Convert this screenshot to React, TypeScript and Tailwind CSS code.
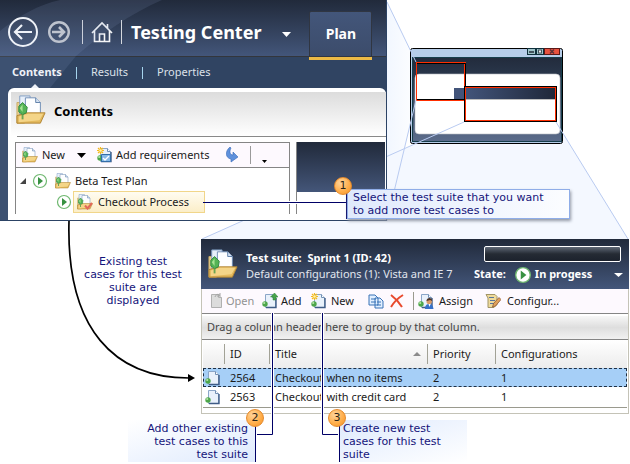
import React, { useState } from 'react';

type IconProps = { className?: string };

const FolderIcon: React.FC<IconProps & { check?: boolean }> = ({ className, check }) => (
  <svg viewBox="0 0 32 32" className={className} aria-hidden="true">
    <path d="M1 8h8v22H1z" fill="#e9cf8d" stroke="#c9ab68" />
    <path d="M4 1h11v20H4z" fill="#e8f0fa" stroke="#7f9cc2" />
    <path d="M10 3h11l5 5v20H10z" fill="#fdfeff" stroke="#6d8bb3" />
    <path d="M21 3v5h5" fill="#d4e1f1" stroke="#5b7da8" />
    <path d="M1 22l11-3h19l-5 11H1z" fill="#e3b95c" stroke="#b08433" />
    <path d="M3 23l10-3h16l-4 7-22 2z" fill="#f4d588" />
    <path d="M3 12l4-4 5 5-1 6-4 2-4-3z" fill="#54b355" stroke="#2f8840" />
    <path d="M4 14l3-4v8z" fill="#a6e394" />
    <path d="M7 21v5" stroke="#6ba552" strokeWidth="2" />
    {check && <path d="M16 23l5 6 9-11" fill="none" stroke="#e2685a" strokeWidth="4" />}
  </svg>
);

type DocKind = 'plain' | 'open' | 'add' | 'new' | 'assign' | 'edit' | 'req';

const DocIcon: React.FC<IconProps & { kind?: DocKind }> = ({ className, kind = 'plain' }) => {
  const gray = kind === 'open';
  return (
    <svg viewBox="0 0 16 16" className={className} aria-hidden="true">
      {kind !== 'edit' && (
        <>
          <path
            d="M3.5 1.5h7l3 3v10h-10z"
            fill={gray ? '#dcdcdc' : '#e9f1fb'}
            stroke={gray ? '#b0b0b0' : '#8ba6c8'}
          />
          <path d="M10.5 1.5v3h3" fill={gray ? '#eee' : '#fff'} stroke={gray ? '#b0b0b0' : '#7390b4'} />
        </>
      )}
      {!gray && kind !== 'edit' && (
        <>
          <path d="M4 14.500h10V5" fill="none" stroke="#3f5c86" strokeWidth="1.400" />
          <circle cx="3" cy="11" r="2.700" fill="#4da64a" />
          <circle cx="2.200" cy="10" r="1.100" fill="#b5e5a7" />
        </>
      )}
      {gray && <path d="M7 4c1-3 3-3 5-2M12 0v3h-3" fill="none" stroke="#a4a4a4" />}
      {kind === 'add' && <path d="M8.500 4L12.500 0 16 4h-2v3h-3V4z" fill="#47a34b" stroke="#2a7d35" strokeWidth=".5" />}
      {(kind === 'new' || kind === 'req') && (
        <>
          <path d="M3.500 0v7M0 3.500h7M1 1l5 5M6 1L1 6" stroke="#f4b91f" strokeWidth="1.200" />
          <circle cx="3.500" cy="3.500" r="1.300" fill="#fff3a6" />
        </>
      )}
      {kind === 'req' && (
        <>
          <path d="M4.500 7.500h9v7h-9z" fill="#86b8e7" stroke="#326da8" />
          <path d="M6 11l2 2 4-4" fill="none" stroke="#fff" strokeWidth="1.300" />
        </>
      )}
      {kind === 'assign' && (
        <>
          <path d="M7 16c0-4 2-5 4-5s4 1 4.500 5z" fill="#3771c8" />
          <circle cx="11.200" cy="8.500" r="2.700" fill="#d99a67" />
          <path d="M8.500 8c0-4 6-4 5.600 0l-2-1z" fill="#493226" />
          <path d="M10.500 11l1 3 1-3z" fill="#fff" />
        </>
      )}
      {kind === 'edit' && (
        <>
          <path d="M1 1.500h9l2 2v8l-3 3H3V5z" fill="#efda9b" stroke="#a19467" />
          <path d="M4 4.500h5M5 7.500h5M5 10.500h4" stroke="#58759c" />
          <path d="M7.500 14l1-3.500L14 4.500 16 6.500 10.500 13z" fill="#e0a15b" stroke="#814c2a" strokeWidth=".7" />
        </>
      )}
    </svg>
  );
};

const PlayIcon: React.FC<IconProps> = ({ className }) => (
  <svg viewBox="0 0 16 16" className={className} aria-hidden="true">
    <circle cx="8" cy="8" r="6.500" fill="#fff" stroke="#6fb870" strokeWidth="1.200" />
    <path d="M6 4l5 4-5 4z" fill="#379141" />
  </svg>
);

const Caret: React.FC<IconProps> = ({ className }) => (
  <svg viewBox="0 0 10 5" preserveAspectRatio="none" className={className} aria-hidden="true">
    <path d="M0 0h10L5 5z" fill="currentColor" />
  </svg>
);

const Badge: React.FC<{ n: number; className: string }> = ({ n, className }) => (
  <span
    className={`absolute z-30 flex size-[18px] items-center justify-center rounded-full border border-[#e58a2c] bg-[radial-gradient(circle_at_35%_30%,#ffd49a,#ffac47_60%,#f29227)] font-['DejaVu_Sans',sans-serif] text-[11px] text-[#2b2418] ${className}`}
  >
    {n}
  </span>
);

/* Small overview of the whole application window */
const OverviewWindow: React.FC = () => (
  <svg viewBox="0 0 154 98" className="h-[98px] w-[154px]" role="img" aria-label="Application window">
    <defs>
      <linearGradient id="frame" x1="0" y1="0" x2="0" y2="1">
        <stop offset="0" stopColor="#222b3c" />
        <stop offset=".2" stopColor="#29364a" />
        <stop offset="1" stopColor="#5b6c8b" />
      </linearGradient>
      <linearGradient id="strip">
        <stop offset="0" stopColor="#42547a" />
        <stop offset="1" stopColor="#1f2739" />
      </linearGradient>
    </defs>
    <rect x=".5" y="1.500" width="152" height="95" rx="2" fill="#b6cde9" stroke="#000" />
    <rect x="2.500" y="10.500" width="149" height="84" fill="url(#frame)" stroke="#173e4c" />
    <rect x="5" y="27" width="145" height="60" rx="4" fill="#fff" stroke="#b8bcc3" strokeWidth=".6" />
    <rect x="117.500" y="1.500" width="8" height="6" fill="#9fc4ca" stroke="#0f303c" />
    <path d="M119 5h5" stroke="#43545e" strokeWidth="2" />
    <rect x="126.500" y="1.500" width="7" height="6" fill="#9fc4ca" stroke="#0f303c" />
    <rect x="128.500" y="3" width="3" height="3" fill="#eee" stroke="#43545e" />
    <rect x="134.500" y="1.500" width="15" height="6" fill="#e8523f" stroke="#5b1817" />
    <path d="M140 2.500l4 4M144 2.500l-4 4" stroke="#59333a" strokeWidth="1.500" />
    <rect x="44" y="41" width="11" height="11" fill="#42547a" />
    <path d="M6.500 15v38M54.500 16v24" stroke="#ff2e00" />
    <path d="M6 15.500h50" stroke="#ff2e00" />
    <path d="M7 16.500h48.500V40M7 52.500h48" fill="none" stroke="#000" />
    <path d="M6 53.500h49" stroke="#ff2e00" />
    <rect x="54.500" y="39.500" width="92" height="35" fill="#fff" stroke="#000" />
    <rect x="55.500" y="40.500" width="90" height="33" fill="#fff" stroke="#ff2e00" />
    <rect x="56" y="41" width="89" height="11" fill="url(#strip)" />
    <path d="M56 52.500h89" stroke="#bdbdbd" />
  </svg>
);

const ContentsPanel: React.FC = () => {
  const tabs = ['Contents', 'Results', 'Properties'];
  const [tab, setTab] = useState('Contents');
  return (
    <section className="relative z-10 h-[221px] min-w-0 flex-[387] overflow-hidden border-r border-b border-[#2c4365] bg-[#304462] text-white">
      <svg viewBox="0 0 180 221" className="pointer-events-none absolute top-0 left-0 z-10 h-[221px] w-[180px]" aria-hidden="true">
        <path d="M0 31C20 15 38 5 60 0h102C130 14 100 35 76 56L50 88H12q-4 0-4 4v129H0z" fill="#8ea5ca" opacity=".14" />
      </svg>
      <header className="flex h-[57px] items-center border-b border-[#33363c] bg-linear-to-b from-[#212a3b] to-[#43567a] pl-2">
        <button aria-label="Back" className="mt-2 shrink-0">
          <svg viewBox="0 0 30 30" className="size-[30px]" fill="none" stroke="#fff">
            <circle cx="15" cy="15" r="14" strokeWidth="2" />
            <path d="M24 15H8M14 8l-7 7 7 7" strokeWidth="2.200" />
          </svg>
        </button>
        <button aria-label="Forward" className="mt-2 ml-[10px] shrink-0">
          <svg viewBox="0 0 22 22" className="size-[22px]" fill="none" stroke="#c6c9cf">
            <circle cx="11" cy="11" r="9.800" strokeWidth="2.400" />
            <path d="M4 11h12M11 6l5 5-5 5" strokeWidth="2.600" />
          </svg>
        </button>
        <span className="mt-2 ml-3 h-6 w-px shrink-0 bg-[#d5d8de]" />
        <button aria-label="Home" className="mt-2 ml-2 shrink-0">
          <svg viewBox="0 0 22 22" className="size-[22px]" fill="none" stroke="#f4f5f7" strokeWidth="1.600">
            <path d="M1 12L11 2l10 10M3.500 10v10.500h15V10M8.500 20v-7h5v7M16.500 7V3" />
          </svg>
        </button>
        <span className="mt-2 ml-2 h-6 w-px shrink-0 bg-[#d5d8de]" />
        <h1 className="mt-2 ml-[9px] shrink-0 text-lg leading-6 font-bold whitespace-nowrap">Testing Center</h1>
        <button aria-label="Choose center" className="mt-3 mr-[18px] ml-auto shrink-0">
          <Caret className="h-[5px] w-[9px]" />
        </button>
        <button className="relative mt-[11px] mr-[14px] h-[46px] w-[63px] shrink-0 rounded-t-xs border border-[#303642] bg-linear-to-b from-[#43567a] to-[#3c4c6b] text-sm font-bold">
          Plan
          <span className="absolute -right-px -bottom-1 -left-px h-[3px] bg-[#edba45]" />
        </button>
      </header>
      <nav className="flex h-[31px] items-center pl-3 text-[11px]">
        {tabs.map((t, i) => (
          <React.Fragment key={t}>
            {i > 0 && <span className="mx-[14px] h-3 w-px bg-[#a6d5ee]" />}
            <button onClick={() => setTab(t)} className={`relative ${t === tab ? 'font-bold' : 'text-[#dce1e9]'}`}>
              {t}
              {t === tab && (
                <svg viewBox="0 0 10 5" className="absolute -bottom-2 left-[18px] h-[5px] w-[10px]" aria-hidden="true">
                  <path d="M0 5l5-5 5 5z" fill="#fff" />
                </svg>
              )}
            </button>
          </React.Fragment>
        ))}
      </nav>
      <div className="ml-2 h-[132px] rounded-t-md bg-white pt-1 pl-[3px] text-[#1b1b1b]">
        <div className="flex h-11 items-center gap-2 bg-linear-to-b from-[#dcdcdc] to-white pl-[5px]">
          <FolderIcon className="-mt-2 size-[30px]" />
          <h2 className="-mt-1 text-[13px] font-bold text-black">Contents</h2>
        </div>
        <hr className="ml-[6px] border-[#898989]" />
        <div className="mt-[5px] ml-1 flex h-[72px] gap-[6px] text-[11px]">
          <div className="min-w-0 flex-1 border border-b-0 border-[#858585]">
            <div className="flex h-[25px] items-center border-b border-[#858585] bg-[#fdf9fe] pl-[6px] whitespace-nowrap">
              <button className="flex items-center gap-1">
                <FolderIcon className="size-4" />
                New
              </button>
              <button aria-label="New options" className="ml-3 text-black">
                <Caret className="h-[5px] w-[9px]" />
              </button>
              <button className="ml-[11px] flex items-center gap-[3px]">
                <DocIcon kind="req" className="size-4" />
                Add requirements
              </button>
              <button aria-label="Refresh" className="ml-[17px]">
                <svg viewBox="0 0 12 16" className="h-4 w-3">
                  <path d="M4 0C-1 4-1 11 5 12v3l7-5-5-5v3C4 8 3 5 5 1z" fill="#5f91dc" stroke="#3568b7" strokeWidth=".6" />
                </svg>
              </button>
              <span className="ml-3 h-[18px] w-px bg-[#9a9a9a]" />
              <button aria-label="More" className="mt-3 ml-[11px] text-black">
                <Caret className="h-[3px] w-[5px]" />
              </button>
            </div>
            <ul>
              <li className="mt-[3px] flex h-5 items-center pl-1">
                <svg viewBox="0 0 6 6" className="size-[6px]" aria-hidden="true">
                  <path d="M6 0v6H0z" fill="#444" />
                </svg>
                <PlayIcon className="ml-[6px] size-4" />
                <FolderIcon className="ml-[7px] size-4" />
                <span className="ml-1">Beta Test Plan</span>
              </li>
              <li className="flex h-[22px] items-center pl-10">
                <PlayIcon className="size-4" />
                <span className="ml-[1px] flex h-[22px] w-[132px] items-center gap-[5px] border border-[#f1d68a] bg-linear-to-b from-[#fffcf1] to-[#fbeec8] pl-[3px] whitespace-nowrap">
                  <FolderIcon check className="size-4" />
                  Checkout Process
                </span>
              </li>
            </ul>
          </div>
          <div className="mr-px w-[89px] border-l border-[#858585]">
            <div className="h-[50px] bg-linear-to-b from-[#212a3b] to-[#445679]" />
          </div>
        </div>
      </div>
    </section>
  );
};

const cases = [
  { id: 2564, title: 'Checkout when no items', priority: 2, configurations: 1 },
  { id: 2563, title: 'Checkout with credit card', priority: 2, configurations: 1 },
];

const SuitePanel: React.FC = () => {
  const [selected, setSelected] = useState(2564);
  return (
    <section className="relative z-10 min-w-0 flex-1 border border-t-0 border-[#c4c3b7] bg-white text-[11px] text-[#1b1b1b]">
      <header className="-mx-px flex h-[50px] items-center bg-linear-to-b from-[#212a3b] to-[#43567a] pr-[6px] pl-[7px] text-white">
        <FolderIcon className="size-[30px]" />
        <div className="ml-2 whitespace-nowrap">
          <h2 className="mt-1 leading-4 font-bold">Test suite:&nbsp; Sprint 1 (ID: 42)</h2>
          <p className="leading-4 text-[#e1e6ee]">Default configurations (1): Vista and IE 7</p>
        </div>
        <div className="ml-auto w-[149px]">
          <div className="mr-[2px] ml-[10px] h-4 rounded-xs border border-white bg-linear-to-b from-[#606977] via-[#252b34] to-[#1c222d]" />
          <div className="mt-[5px] flex h-4 items-center font-bold whitespace-nowrap">
            <span>State:</span>
            <PlayIcon className="ml-2 size-[18px] shrink-0" />
            <span className="ml-[3px]">In progess</span>
            <button aria-label="Change state" className="ml-auto">
              <Caret className="h-[4px] w-[9px]" />
            </button>
          </div>
        </div>
      </header>
      <div className="flex h-[25px] items-center border-b border-[#858585] bg-[#fdf9fe] pl-[6px] whitespace-nowrap">
        <button disabled className="flex w-[54px] items-center gap-[2px] text-[#929292]">
          <DocIcon kind="open" className="size-4 shrink-0" />
          Open
        </button>
        <button className="flex w-[49px] items-center gap-[3px]">
          <DocIcon kind="add" className="size-4 shrink-0" />
          Add
        </button>
        <button className="flex w-[57px] items-center gap-[4px]">
          <DocIcon kind="new" className="size-4 shrink-0" />
          New
        </button>
        <button aria-label="Copy" className="mr-[6px]">
          <svg viewBox="0 0 16 16" className="size-4" fill="#e1efff" stroke="#3972b7">
            <path d="M1 2h6l3 3v7H1zM3 6h5M3 9h5M7 5h5l3 3v7H7zM9 9h4M9 12h4" />
          </svg>
        </button>
        <button aria-label="Delete">
          <svg viewBox="0 0 14 14" className="size-[14px]" fill="none" stroke="#e84a2e" strokeWidth="2">
            <path d="M1 1c4 3 8 7 11 12M13 1C8 4 4 8 1 13" />
          </svg>
        </button>
        <span className="mr-1 ml-[9px] h-[18px] w-px bg-[#9a9a8e]" />
        <button className="mr-3 flex items-center gap-[5px]">
          <DocIcon kind="assign" className="size-4" />
          Assign
        </button>
        <button className="flex items-center gap-[6px]">
          <DocIcon kind="edit" className="size-4" />
          Configur...
        </button>
      </div>
      <p className="mt-[2px] flex h-6 items-center border-b border-[#858585] bg-linear-to-b from-[#f7f7f7] via-[#dedede] to-[#f1f1f1] pl-[5px] text-[#454545]">
        Drag a column header here to group by that column.
      </p>
      <div className="mx-px mb-[5px] border-b border-[#9a9a8e] pb-px">
        <table className="w-full table-fixed border-collapse text-left">
          <colgroup>
            <col className="w-[21px]" />
            <col className="w-[45px]" />
            <col className="w-[158px]" />
            <col className="w-[68px]" />
            <col />
          </colgroup>
          <thead className="h-7 bg-linear-to-b from-white to-[#ececec]">
            <tr>
              <th aria-label="Type" />
              {['ID', 'Title', 'Priority', 'Configurations'].map((h) => (
                <th key={h} className="p-0 font-normal">
                  <div className="flex h-5 items-center border-l border-[#a2a296] pr-[6px] pl-[5px]">
                    {h}
                    {h === 'Title' && <Caret className="ml-auto h-[4px] w-[8px] rotate-180 text-[#8b8b8b]" />}
                  </div>
                </th>
              ))}
            </tr>
          </thead>
          <tbody>
            {cases.map((c) => (
              <tr
                key={c.id}
                onClick={() => setSelected(c.id)}
                className={`h-[19px] leading-[18px] ${c.id === selected ? 'bg-[#a6cff7] outline-1 -outline-offset-1 outline-[#1f2f42] outline-dashed' : ''}`}
              >
                <td className="p-0 pl-[2px]">
                  <DocIcon className="size-4" />
                </td>
                <td className="p-0 pl-[6px]">{c.id}</td>
                <td className="p-0 pl-[6px] whitespace-nowrap">{c.title}</td>
                <td className="p-0 pl-[6px]">{c.priority}</td>
                <td className="p-0 pl-[6px]">{c.configurations}</td>
              </tr>
            ))}
          </tbody>
        </table>
      </div>
    </section>
  );
};

/* Light beams that lead from the overview to the enlarged panels */
const Beams: React.FC<{ front?: boolean }> = ({ front }) => (
  <svg
    viewBox="0 0 630 464"
    preserveAspectRatio="none"
    className="pointer-events-none absolute inset-0 h-full w-full"
    aria-hidden="true"
  >
    {!front && (
      <>
        <defs>
          <linearGradient id="beam">
            <stop offset="0" stopColor="#f2f7ff" />
            <stop offset="1" stopColor="#fdfeff" />
          </linearGradient>
        </defs>
        <path d="M387 2l29 60v38l-29 121z" fill="url(#beam)" />
        <path d="M464 122h92l72 117H202z" fill="#f4f8ff" />
      </>
    )}
    {front && (
      <path d="M387 2l29 60M416 100l-29 121M464 122L202 239M556 122l72 117" fill="none" stroke="#b9cbf1" />
    )}
  </svg>
);

const Connectors: React.FC = () => (
  <svg viewBox="0 0 630 464" preserveAspectRatio="none" className="pointer-events-none absolute inset-0 z-20 h-full w-full" fill="none" aria-hidden="true">
    <path d="M69 221C66 330 115 378 189 378" stroke="#000" strokeWidth="1.700" />
    <path d="M188 374v8l7-4z" fill="#000" />
    <path d="M205 202.500h142M272.500 313v121M322.500 313v121" stroke="#fff" strokeWidth="3" />
    <path
      d="M203 202.500h145M346.500 192v27M272.500 313v121.500H257M322.500 313v121.500H338M255.500 420v42M339.500 420v42"
      stroke="#000066"
    />
  </svg>
);

const App: React.FC = () => {
  return (
    <main className="relative w-full overflow-hidden bg-white font-['Noto_Sans',sans-serif]">
      <Beams />
      <div className="flex">
        <ContentsPanel />
        <div className="relative min-w-0 flex-[243]">
          <div className="pt-[47px] pl-[23px]">
            <OverviewWindow />
          </div>
        </div>
      </div>
      <Beams front />
      <div className="mt-[18px] flex pr-px">
        <p className="w-[201px] shrink-0 pt-4 pr-[18px] pl-[83px] text-center font-['DejaVu_Sans',sans-serif] text-[11px] leading-[13px] whitespace-nowrap text-[#14147a]">
          Existing test<br />cases for this test<br />suite are<br />displayed
        </p>
        <SuitePanel />
      </div>
      <div className="mt-[6px] mb-[2px] flex gap-[84px] pl-32 font-['DejaVu_Sans',sans-serif] text-[11px] leading-[13px] text-[#14147a]">
        <p className="relative h-[42px] w-[128px] bg-linear-to-tl from-[#dfeafd] to-white pt-[2px] pr-2 text-right">
          Add other existing<br />test cases to this<br />test suite
        </p>
        <p className="relative h-[42px] w-[127px] bg-linear-to-br from-[#dfeafd] to-white pt-[2px] pl-[3px]">
          Create new test<br />cases for this test<br />suite
        </p>
      </div>
      <Connectors />
      <p className="absolute top-[189px] left-[347px] z-20 h-[30px] w-[223px] border border-[#8fade8] bg-linear-to-r from-[#dfe9fc] to-[#fcfdff] pt-px pl-[5px] font-['DejaVu_Sans',sans-serif] text-[11px] leading-[13px] whitespace-nowrap text-[#14147a] shadow-[1px_2px_3px_#9298a5]">
        Select the test suite that you want<br />to add more test cases to
      </p>
      <Badge n={1} className="top-[177px] left-[334px]" />
      <Badge n={2} className="top-[409px] left-[246px]" />
      <Badge n={3} className="top-[409px] left-[328px]" />
    </main>
  );
};

export default App;
